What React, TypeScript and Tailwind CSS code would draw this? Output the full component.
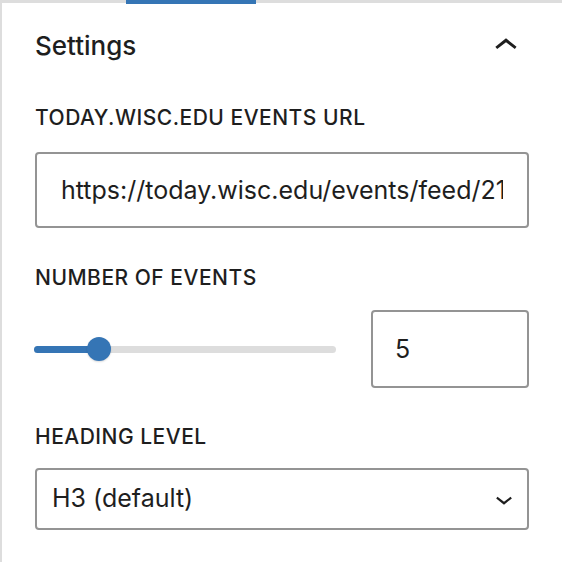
import { useState } from 'react'

function ChevronUp() {
  return (
    <svg viewBox="0 0 24 24" className="h-[46px] w-[46px] fill-[#1e1e1e]" aria-hidden>
      <path d="M6.5 12.4L12 8l5.5 4.4-.9 1.2L12 10l-4.6 3.6-1-1.2z" />
    </svg>
  )
}

function ChevronDown() {
  return (
    <svg viewBox="0 0 24 24" className="h-[34px] w-[34px] fill-[#1e1e1e]" aria-hidden>
      <path d="M17.5 11.6L12 16l-5.5-4.4.9-1.2L12 14l4.6-3.6 1 1.2z" />
    </svg>
  )
}

export default function App() {
  const [url, setUrl] = useState('https://today.wisc.edu/events/feed/2134')
  const [count, setCount] = useState('5')

  return (
    <div className="h-[562px] w-[562px] overflow-hidden border-l-2 border-[#dddddd] bg-white font-['Inter','Noto_Sans',sans-serif] text-[#1e1e1e]">
      {/* tab strip */}
      <div className="relative h-[3px] bg-[#dddddd]">
        <div className="absolute left-[124px] top-0 h-[4px] w-[130px] bg-[#3575b5]" />
      </div>

      <div className="pl-[33px] pr-[33px]">
        <div className="mt-[20px] flex h-[46px] items-center justify-between">
          <h2 className="text-[26px] font-medium leading-[46px]">Settings</h2>
          <ChevronUp />
        </div>

        <label className="mt-[39px] block text-[21px] font-medium uppercase leading-[20px] tracking-[0.5px]">
          today.wisc.edu events URL
        </label>
        <input
          value={url}
          onChange={e => setUrl(e.target.value)}
          className="mt-[24px] block h-[76px] w-full rounded-[4px] border-2 border-[#949494] bg-white px-[24px] text-[25px] outline-none"
        />

        <label className="mt-[40px] block text-[21px] font-medium uppercase leading-[20px] tracking-[0.5px]">
          Number of events
        </label>
        <div className="mt-[22px] flex h-[78px] items-center gap-[34px]">
          <div className="relative flex h-[24px] flex-1 items-center">
            <div className="ml-[-1px] h-[7px] w-full rounded-full bg-[#dddddd]">
              <div className="h-[7px] w-[65px] rounded-full bg-[#3575b5]" />
            </div>
            <div className="absolute left-[52px] top-0 h-[24px] w-[24px] rounded-full bg-[#3575b5] shadow-[0_1px_2px_rgba(0,0,0,0.15)]" />
          </div>
          <input
            value={count}
            onChange={e => setCount(e.target.value)}
            className="block h-[78px] w-[158px] rounded-[4px] border-2 border-[#949494] bg-white px-[22px] text-[25px] outline-none"
          />
        </div>

        <label className="mt-[39px] block text-[21px] font-medium uppercase leading-[20px] tracking-[0.5px]">
          Heading level
        </label>
        <div className="mt-[21px] flex h-[62px] items-center justify-between rounded-[4px] border-2 border-[#949494] pl-[15px] pr-[6px]">
          <span className="text-[25px]">H3 (default)</span>
          <ChevronDown />
        </div>
      </div>
    </div>
  )
}
